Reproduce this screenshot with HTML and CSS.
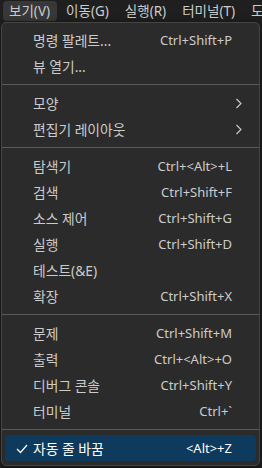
FILE: index.html
```html
<!DOCTYPE html>
<html lang="ko">
<head>
<meta charset="utf-8">
<link rel="stylesheet" href="styles.css">
</head>
<body>
<div class="app">
  <div class="menubar">
    <div class="mb-item active">보기(V)</div>
    <div class="mb-item">이동(G)</div>
    <div class="mb-item">실행(R)</div>
    <div class="mb-item">터미널(T)</div>
    <div class="mb-item">도움말(H)</div>
  </div>
  <div class="editor"></div>
  <div class="menu">
    <div class="row"><span class="check"></span><span class="label">명령 팔레트...</span><span class="key">Ctrl+Shift+P</span></div>
    <div class="row"><span class="check"></span><span class="label">뷰 열기...</span><span class="key"></span></div>
    <div class="sep"></div>
    <div class="row"><span class="check"></span><span class="label">모양</span><span class="sub"><svg width="8" height="11" viewBox="0 0 8 11"><path d="M1.5 1 L6 5.5 L1.5 10" fill="none" stroke="#cccccc" stroke-width="1.1"/></svg></span></div>
    <div class="row"><span class="check"></span><span class="label">편집기 레이아웃</span><span class="sub"><svg width="8" height="11" viewBox="0 0 8 11"><path d="M1.5 1 L6 5.5 L1.5 10" fill="none" stroke="#cccccc" stroke-width="1.1"/></svg></span></div>
    <div class="sep"></div>
    <div class="row"><span class="check"></span><span class="label">탐색기</span><span class="key">Ctrl+&lt;Alt&gt;+L</span></div>
    <div class="row"><span class="check"></span><span class="label">검색</span><span class="key">Ctrl+Shift+F</span></div>
    <div class="row"><span class="check"></span><span class="label">소스 제어</span><span class="key">Ctrl+Shift+G</span></div>
    <div class="row"><span class="check"></span><span class="label">실행</span><span class="key">Ctrl+Shift+D</span></div>
    <div class="row"><span class="check"></span><span class="label">테스트(&amp;E)</span><span class="key"></span></div>
    <div class="row"><span class="check"></span><span class="label">확장</span><span class="key">Ctrl+Shift+X</span></div>
    <div class="sep"></div>
    <div class="row"><span class="check"></span><span class="label">문제</span><span class="key">Ctrl+Shift+M</span></div>
    <div class="row"><span class="check"></span><span class="label">출력</span><span class="key">Ctrl+&lt;Alt&gt;+O</span></div>
    <div class="row"><span class="check"></span><span class="label">디버그 콘솔</span><span class="key">Ctrl+Shift+Y</span></div>
    <div class="row"><span class="check"></span><span class="label">터미널</span><span class="key">Ctrl+`</span></div>
    <div class="sep"></div>
    <div class="row selected"><span class="check"><svg width="12" height="12" viewBox="0 0 12 12"><path d="M1 6 L4.5 9.5 L11 2" fill="none" stroke="#ffffff" stroke-width="1.2"/></svg></span><span class="label">자동 줄 바꿈</span><span class="key">&lt;Alt&gt;+Z</span></div>
  </div>
</div>
</body>
</html>
```
FILE: styles.css
```css
* { box-sizing: border-box; }
html, body {
  margin: 0;
  padding: 0;
  width: 262px;
  height: 468px;
  overflow: hidden;
  background: #1f1f1f;
}
body {
  font-family: "Segoe UI", "Noto Sans", "Noto Sans CJK KR", sans-serif;
  font-size: 13px;
  color: #cccccc;
}
.app {
  position: relative;
  width: 262px;
  height: 468px;
}
.menubar {
  display: flex;
  height: 22px;
  padding: 1px 0 1px 3px;
  background: #1f1f1f;
  white-space: nowrap;
  overflow: hidden;
  font-size: 13.5px;
}
.mb-item {
  display: flex;
  align-items: center;
  padding: 0 7px 0 6px;
  margin-right: 3px;
  border-radius: 4px;
  color: #cccccc;
  line-height: 20px;
  flex: 0 0 auto;
}
.mb-item.active {
  background: #383838;
}
.editor {
  height: 446px;
  background: #1f1f1f;
}
.menu {
  position: absolute;
  left: 1px;
  top: 22px;
  width: 259px;
  height: 444px;
  background: #2b2b2b;
  border: 1px solid #454545;
  border-radius: 5px;
  padding: 4px 3px;
  display: flex;
  flex-direction: column;
  box-shadow: 0 2px 8px rgba(0,0,0,0.5);
}
.row {
  display: flex;
  align-items: center;
  height: 26px;
  flex: 0 0 26px;
  border-radius: 3px;
  white-space: nowrap;
}
.check {
  width: 28px;
  flex: 0 0 28px;
  display: flex;
  justify-content: flex-end;
  padding-right: 5px;
  padding-top: 1px;
}
.label {
  flex: 1;
  font-size: 13.8px;
}
.key {
  padding-right: 24px;
}
.sub {
  display: flex;
  align-items: center;
  padding-right: 13px;
}
.sep {
  flex: 0 0 11px;
  display: flex;
  align-items: center;
  margin: 0 -3px;
}
.sep::before {
  content: "";
  display: block;
  width: 100%;
  height: 1px;
  background: #5a5a5a;
}
.row.selected {
  background: #0e3a5d;
  color: #ffffff;
}
```
